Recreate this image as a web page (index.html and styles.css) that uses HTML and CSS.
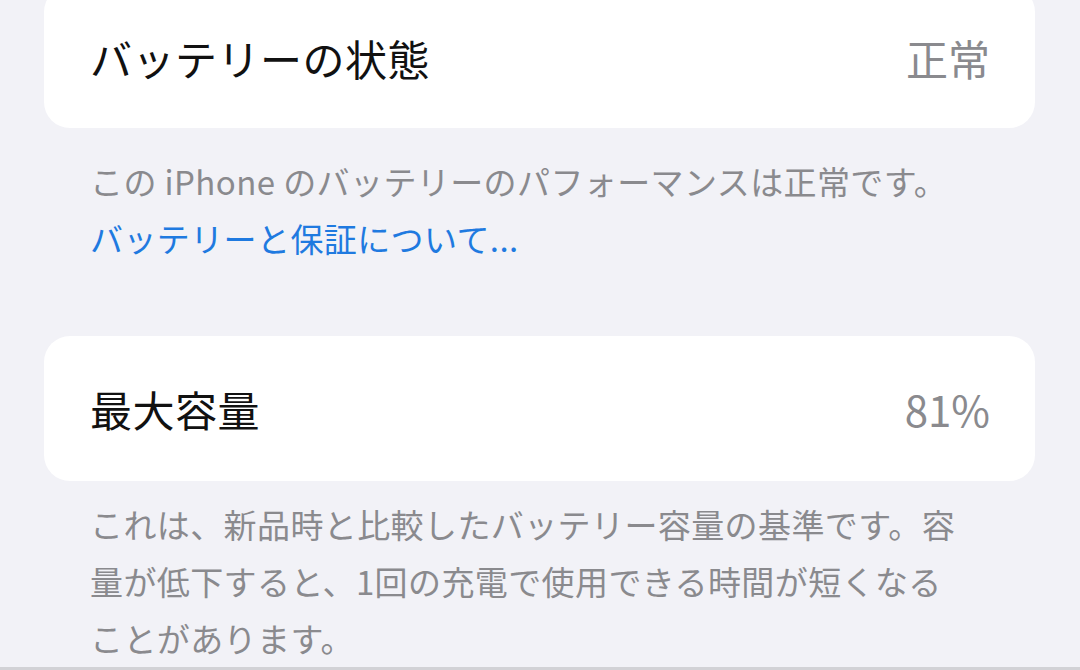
FILE: index.html
```html
<!DOCTYPE html>
<html lang="ja">
<head>
  <meta charset="UTF-8" />
  <title>バッテリーの状態</title>
  <meta name="viewport" content="width=device-width, initial-scale=1.0" />
  <link rel="stylesheet" href="styles.css">
</head>
<body>
  <div class="page">
    <!-- Battery health -->
    <div class="card card-health">
      <span class="label">バッテリーの状態</span>
      <span class="value">正常</span>
    </div>
    <div class="note note-health">
      <p>この iPhone のバッテリーのパフォーマンスは正常です。</p>
      <a href="#" class="link">バッテリーと保証について...</a>
    </div>

    <!-- Maximum capacity -->
    <div class="card card-capacity">
      <span class="label">最大容量</span>
      <span class="value">81%</span>
    </div>
    <div class="note note-capacity">
      <p>これは、新品時と比較したバッテリー容量の基準です。容<br>量が低下すると、1回の充電で使用できる時間が短くなる<br>ことがあります。</p>
    </div>
  </div>
</body>
</html>
```

FILE: styles.css
```css
* {
  box-sizing: border-box;
}

body {
  margin: 0;
  padding: 0;
  background: #f2f2f7;
  font-family: "Noto Sans CJK JP", "Noto Sans", sans-serif;
  overflow: hidden;
}

.page {
  height: 670px;
  padding: 0 45px 0 44px;
  border-bottom: 3px solid #d2d2d6;
  overflow: hidden;
}

.card {
  display: flex;
  align-items: center;
  justify-content: space-between;
  background: #fff;
  border-radius: 26px;
  padding: 0 45px 0 46px;
}

.card-health {
  margin-top: -14px;
  height: 142px;
}

.card-capacity {
  height: 145px;
}

.label {
  font-size: 42px;
  letter-spacing: 0.5px;
  color: #111;
}

.value {
  font-size: 42px;
  color: #8a8a8e;
}

.note {
  padding: 0 30px 0 46px;
  font-size: 33px;
  letter-spacing: 0.4px;
  line-height: 57px;
  color: #8a8a8e;
  white-space: nowrap;
}

.note p {
  margin: 0;
}

.note-health {
  margin-top: 25px;
  margin-bottom: 69px;
}

.note-capacity {
  margin-top: 15px;
}

.link {
  color: #1f7ae0;
  text-decoration: none;
}
```
